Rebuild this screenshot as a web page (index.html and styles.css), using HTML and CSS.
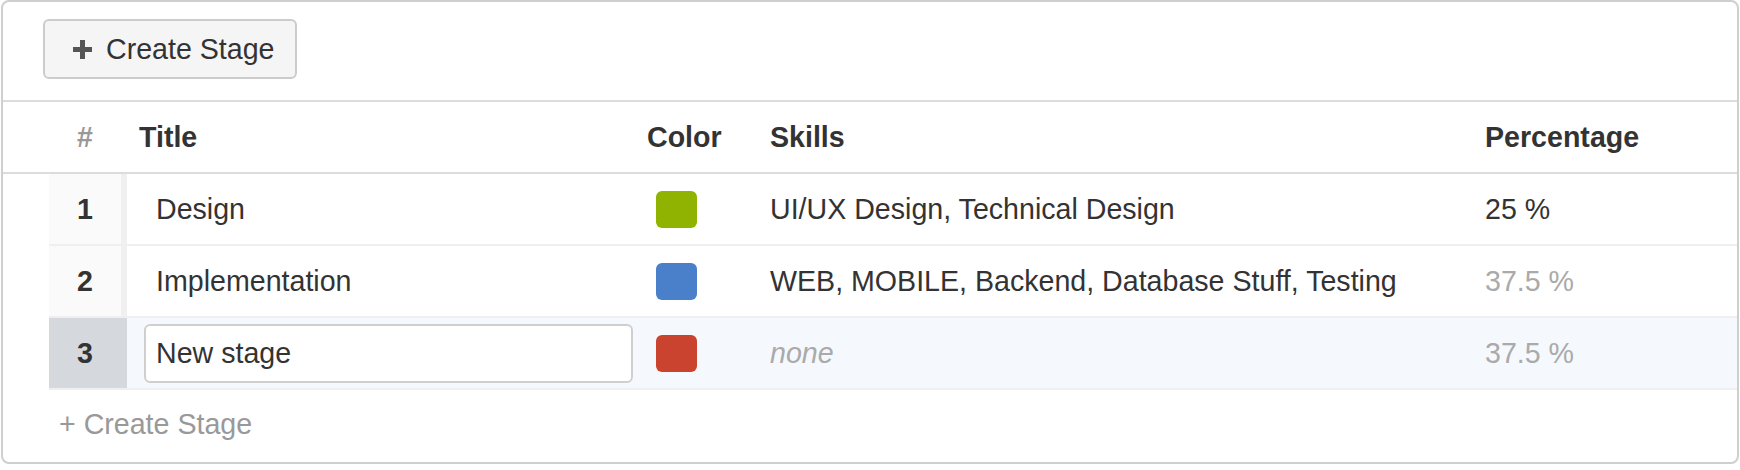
FILE: index.html
```html
<!DOCTYPE html>
<html>
<head>
<meta charset="utf-8">
<link rel="stylesheet" href="styles.css">
</head>
<body>
<div class="panel">
  <div class="toolbar">
    <button class="btn" type="button">
      <svg class="plus" width="21" height="21" viewBox="0 0 21 21"><path d="M10.5 1v19M1 10.5h19" stroke="#555" stroke-width="5" fill="none"/></svg>
      <span>Create Stage</span>
    </button>
  </div>
  <div class="thead">
    <div class="grid">
      <div class="h-num">#</div>
      <div class="h-title">Title</div>
      <div class="h-color">Color</div>
      <div class="h-skills">Skills</div>
      <div class="h-pct">Percentage</div>
    </div>
  </div>
  <div class="tbody">
    <div class="grid row">
      <div class="num">1</div>
      <div class="title">Design</div>
      <div class="color"><span class="swatch green"></span></div>
      <div class="skills">UI/UX Design, Technical Design</div>
      <div class="pct">25 %</div>
    </div>
    <div class="grid row">
      <div class="num">2</div>
      <div class="title">Implementation</div>
      <div class="color"><span class="swatch blue"></span></div>
      <div class="skills">WEB, MOBILE, Backend, Database Stuff, Testing</div>
      <div class="pct muted">37.5 %</div>
    </div>
    <div class="grid row active">
      <div class="num">3</div>
      <div class="title edit"><input class="input" type="text" value="New stage"></div>
      <div class="color"><span class="swatch red"></span></div>
      <div class="skills none">none</div>
      <div class="pct muted">37.5 %</div>
    </div>
  </div>
  <div class="footer">+ Create Stage</div>
</div>
</body>
</html>
```
FILE: styles.css
```css
html, body {
  margin: 0;
  padding: 0;
  background: #fff;
}
body {
  font-family: "Liberation Sans", Arial, sans-serif;
  font-size: 28.6px;
  color: #333;
}
.panel {
  margin: 0 1px;
  height: 460px;
  border: 2px solid #cfcfcf;
  border-radius: 8px;
  box-sizing: content-box;
  overflow: hidden;
}
.toolbar {
  padding: 17px 40px 21px;
  border-bottom: 2px solid #dcdcdc;
}
.btn {
  display: flex;
  align-items: center;
  height: 60px;
  box-sizing: border-box;
  padding: 0 20px 0 27px;
  background: #f5f5f5;
  border: 2px solid #cccccc;
  border-radius: 6px;
  font-family: inherit;
  font-size: 28.6px;
  color: #333;
  gap: 13px;
}
.plus {
  display: block;
}
.grid {
  display: grid;
  grid-template-columns: 78px 513px 115px 715px 1fr;
  align-items: center;
}
.thead {
  height: 71px;
  border-bottom: 2px solid #dcdcdc;
  padding-left: 46px;
}
.thead .grid {
  height: 73px;
  margin-top: -1px;
  margin-bottom: -1px;
  font-weight: bold;
}
.h-num {
  width: 72px;
  text-align: center;
  color: #999;
}
.h-title { padding-left: 12px; }
.h-color { padding-left: 7px; }
.h-skills { padding-left: 15px; }
.h-pct { padding-left: 15px; }
.tbody {
  margin-left: 46px;
}
.row {
  height: 70px;
  border-bottom: 2px solid #efefef;
  align-items: stretch;
}
.row > div {
  display: flex;
  align-items: center;
}
.num {
  justify-content: center;
  font-weight: bold;
  background: #fafafa;
  border-right: 6px solid #f0f0f0;
}
.title { padding-left: 29px; }
.title.edit { padding-left: 17px; }
.color { padding-left: 16px; }
.skills { padding-left: 15px; }
.pct { padding-left: 15px; }
.muted { color: #aaa; }
.none {
  color: #aaa;
  font-style: italic;
}
.swatch {
  display: block;
  width: 41px;
  height: 37px;
  border-radius: 6px;
}
.green { background: #8fb300; }
.blue { background: #4a7fc9; }
.red { background: #c9432f; }
.row.active {
  background: #f5f9fd;
}
.row.active .num {
  background: #d5d9de;
  border-right-color: #d5d9de;
}
.input {
  width: 489px;
  height: 59px;
  box-sizing: border-box;
  border: 2px solid #cfcfcf;
  border-radius: 6px;
  background: #fff;
  padding: 0 10px;
  font-family: inherit;
  font-size: 28.6px;
  color: #333;
  outline: none;
}
.footer {
  height: 70px;
  line-height: 68px;
  padding-left: 56px;
  color: #999;
}
```
